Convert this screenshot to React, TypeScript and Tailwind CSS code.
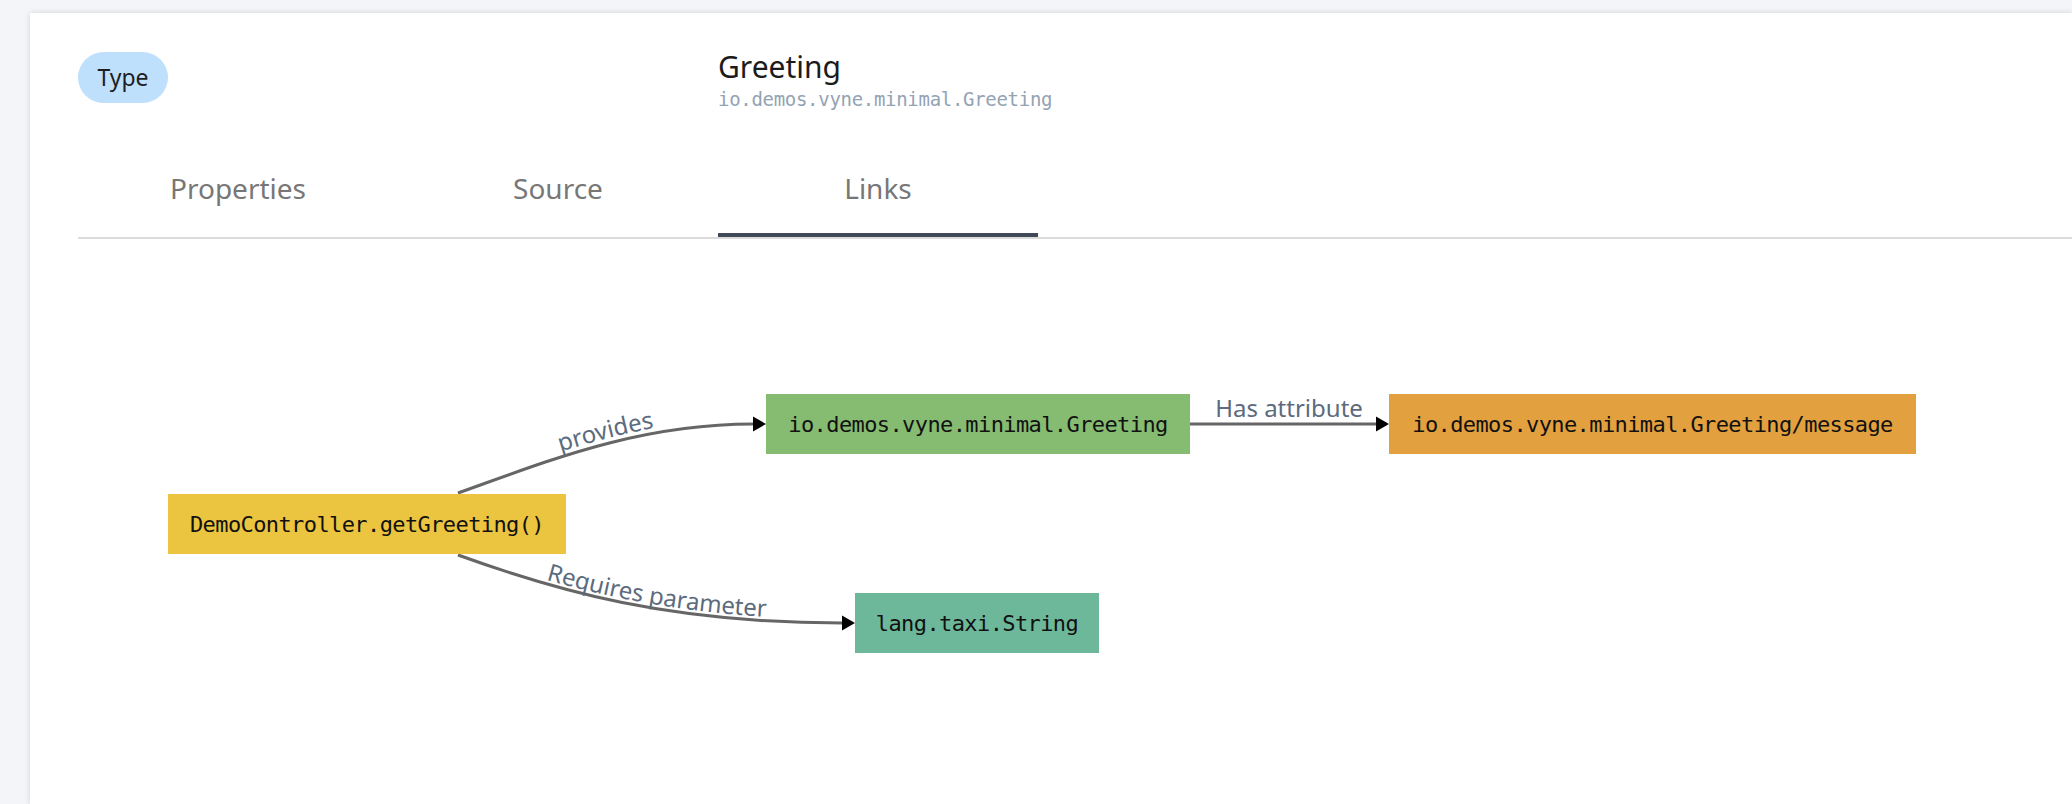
import React from 'react';

type GraphNode = {
  id: string;
  label: string;
  left: number;
  top: number;
  width: number;
  color: string;
};

const sans = "font-['Noto_Sans',sans-serif]";

const nodes: GraphNode[] = [
  { id: 'op', label: 'DemoController.getGreeting()', left: 90, top: 255, width: 398, color: 'bg-[#ebc440]' },
  { id: 'type', label: 'io.demos.vyne.minimal.Greeting', left: 688, top: 155, width: 424, color: 'bg-[#86bb72]' },
  { id: 'param', label: 'lang.taxi.String', left: 777, top: 354, width: 244, color: 'bg-[#6db89b]' },
  { id: 'attr', label: 'io.demos.vyne.minimal.Greeting/message', left: 1311, top: 155, width: 527, color: 'bg-[#e3a03f]' },
];

const tabs = ['Properties', 'Source', 'Links'];

function LinkGraph() {
  return (
    <div className="relative h-[540px]">
      <svg className="absolute inset-0 h-full w-full" xmlns="http://www.w3.org/2000/svg">
        {/* provides */}
        <path id="edge-provides" d="M380,254 C470,222 560,185 675,185" fill="none" stroke="#666" strokeWidth="3" />
        <polygon points="675,177.5 688,185 675,192.5" fill="#000" />
        <text fontFamily="'Noto Sans', sans-serif" fontSize="24" fill="#5c6b7e" dy="-5">
          <textPath href="#edge-provides" startOffset="52%" textAnchor="middle">provides</textPath>
        </text>

        {/* has attribute */}
        <path d="M1112,185 L1298,185" fill="none" stroke="#666" strokeWidth="3" />
        <polygon points="1298,177.5 1311,185 1298,192.5" fill="#000" />
        <text x="1211" y="178" fontFamily="'Noto Sans', sans-serif" fontSize="24" fill="#5c6b7e" textAnchor="middle">
          Has attribute
        </text>

        {/* requires parameter */}
        <path id="edge-requires" d="M380,316 C480,352 590,384 764,384" fill="none" stroke="#666" strokeWidth="3" />
        <polygon points="764,376.5 777,384 764,391.5" fill="#000" />
        <text fontFamily="'Noto Sans', sans-serif" fontSize="24" fill="#5c6b7e" dy="-4">
          <textPath href="#edge-requires" startOffset="52%" textAnchor="middle">Requires parameter</textPath>
        </text>
      </svg>

      {nodes.map(n => (
        <div
          key={n.id}
          className={`absolute flex h-[60px] items-center justify-center ${n.color} font-['DejaVu_Sans_Mono',monospace] text-[22px] tracking-[-0.6px] text-[#111]`}
          style={{ left: n.left, top: n.top, width: n.width }}
        >
          {n.label}
        </div>
      ))}
    </div>
  );
}

export default function App() {
  return (
    <div className={`h-[804px] overflow-hidden bg-[#f4f5f9] pl-[30px] pt-[13px] ${sans}`}>
      <div className="h-full bg-white pl-[48px] pt-[39px] shadow-[0_0_6px_rgba(0,0,0,0.14)]">
        {/* Header */}
        <div className="grid h-[91px] grid-cols-[640px_1fr]">
          <div>
            <span className="inline-flex h-[51px] w-[90px] items-center justify-center rounded-full bg-[#bfe0fd] text-[23px] text-[#1e1e1e]">
              Type
            </span>
          </div>
          <div className="-mt-[3px]">
            <div className="text-[30px] leading-[36px] text-[#1b1b1b]">Greeting</div>
            <div className="mt-[2px] font-['DejaVu_Sans_Mono',monospace] text-[19px] leading-[24px] tracking-[-0.3px] text-[#94a3b4]">
              io.demos.vyne.minimal.Greeting
            </div>
          </div>
        </div>

        {/* Tabs */}
        <div className="flex border-b-2 border-[#dcdcdc]">
          {tabs.map(t => (
            <div
              key={t}
              className={`flex h-[94px] w-[320px] items-center justify-center border-b-4 text-[28px] text-[#777] ${
                t === 'Links' ? 'border-[#3f4a56]' : 'border-transparent'
              }`}
            >
              {t}
            </div>
          ))}
        </div>

        <LinkGraph />
      </div>
    </div>
  );
}
